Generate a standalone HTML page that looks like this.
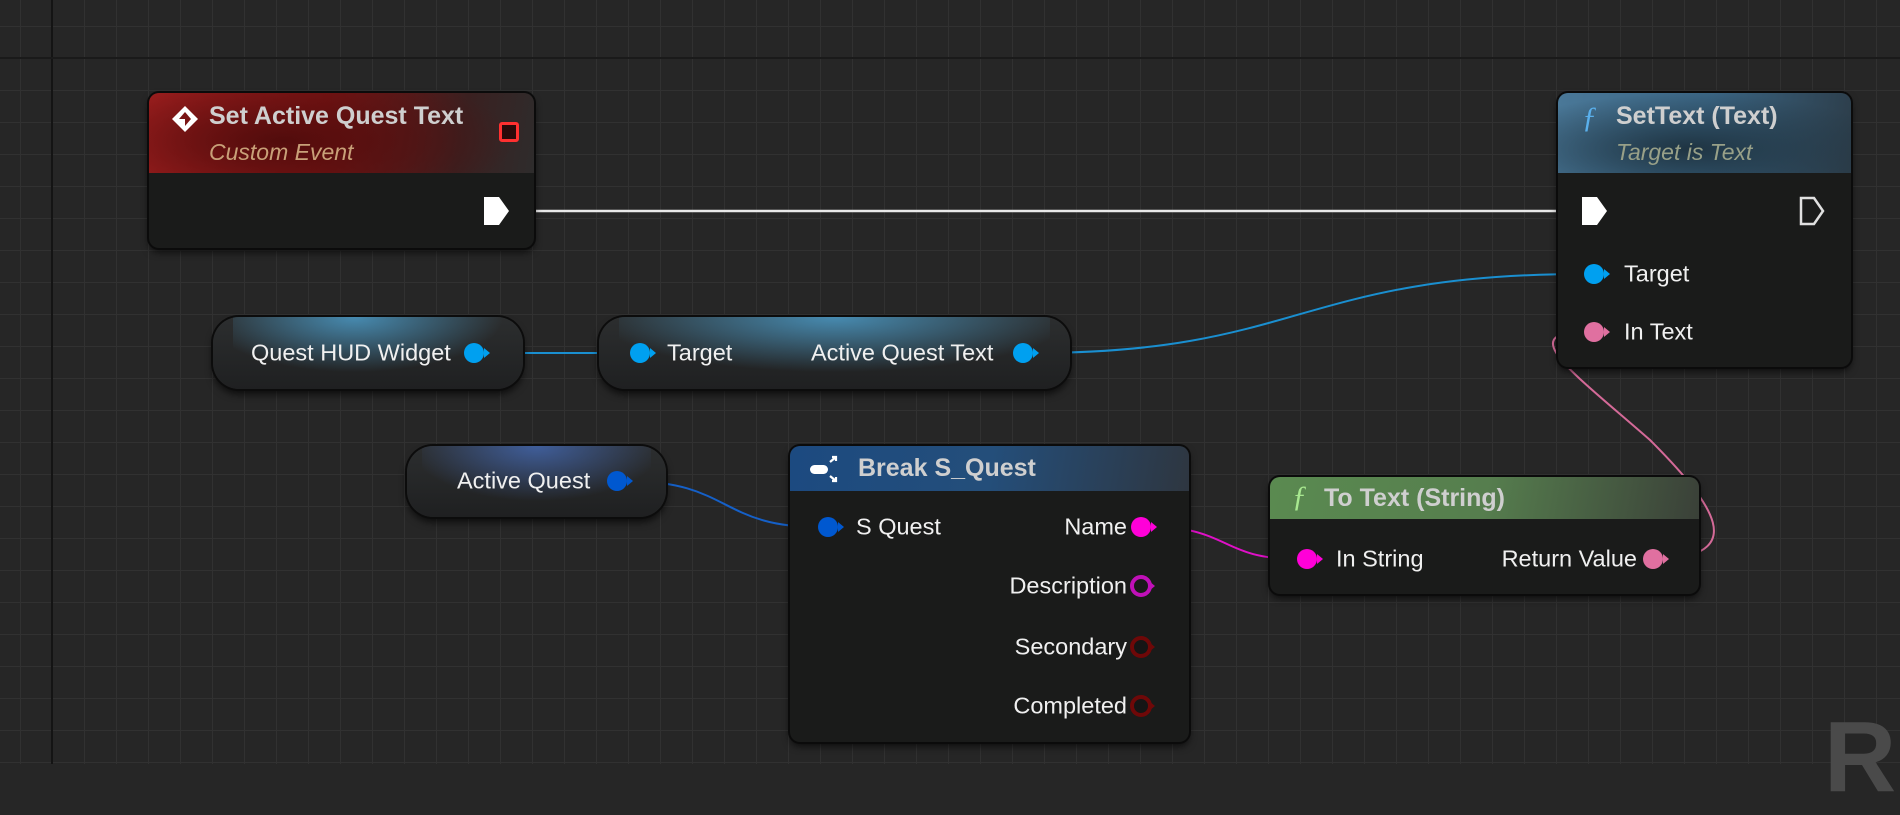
<!DOCTYPE html>
<html><head><meta charset="utf-8"><style>
*{margin:0;padding:0;box-sizing:border-box}
html{background:#262626}
body{width:1900px;height:764px;overflow:hidden;position:relative;background:#262626;font-family:"Liberation Sans",sans-serif;
background-image:linear-gradient(90deg,#313131 0 1px,transparent 1px),linear-gradient(#313131 0 1px,transparent 1px);
background-size:32px 32px,32px 32px;background-position:20px 0,0 26px;}
.node{position:absolute;background:#1a1b1a;border-radius:10px;box-shadow:0 0 0 2px #0b0b0b,0 4px 8px rgba(0,0,0,.7);overflow:hidden}
.hdr{position:absolute;left:0;top:0;right:0}
.t{position:absolute;color:#cfcfcf;font-weight:bold;font-size:25px;white-space:nowrap}
.s{position:absolute;font-style:italic;font-size:23px;white-space:nowrap}
.lbl{position:absolute;color:#f0f0f0;font-size:23.5px;white-space:nowrap;transform:translateY(-50%)}
.pill{position:absolute;border-radius:26px;background:linear-gradient(#2c2e2f,#1f2021);box-shadow:0 0 0 2px #0c0c0c,0 5px 8px rgba(0,0,0,.7);overflow:hidden}
.pin{position:absolute;width:20px;height:20px;border-radius:50%;transform:translate(-50%,-50%)}
.pin:after{content:"";position:absolute;left:100%;top:50%;margin-top:-5px;border-left:6px solid;border-left-color:inherit;border-top:5px solid transparent;border-bottom:5px solid transparent}
.ring{width:22px;height:22px;border:4px solid}
.ring:after{left:calc(100% + 1px)}
</style></head><body>
<div style="position:fixed;left:51px;top:0;width:2px;height:764px;background:#141414"></div>
<div style="position:fixed;left:0;top:57px;width:1900px;height:2px;background:#1a1a1a"></div>
<svg width="1900" height="764" style="position:absolute;left:0;top:0">
<path d="M514 211 L1580 211" stroke="#e8e8e8" stroke-width="2.5" fill="none"/>
<path d="M484 353 L630 353" stroke="#1a8fd0" stroke-width="2" fill="none"/>
<path d="M1033 353 C1300 353 1300 274 1585 274" stroke="#1a8fd0" stroke-width="2" fill="none"/>
<path d="M627 481 C730 481 720 527 818 527" stroke="#1560c8" stroke-width="2" fill="none"/>
<path d="M1151 527 C1230 527 1220 559 1297 559" stroke="#e010c8" stroke-width="2" fill="none"/>
<path d="M1672 559 C1740 550 1720 510 1650 440 C1570 370 1515 332 1585 332" stroke="#d46a98" stroke-width="2" fill="none"/>
</svg>

<!-- Event node -->
<div class="node" style="left:149px;top:93px;width:385px;height:155px">
<div class="hdr" style="height:80px;background:radial-gradient(ellipse 60% 90% at 35% 60%,#520c0c,transparent),linear-gradient(100deg,#a52020 0%,#7a1414 45%,#3a2020 80%,#2e2c2c 100%)"></div>
<svg style="position:absolute;left:20px;top:10px" width="32" height="32" viewBox="0 0 32 32"><path d="M16 3 L29 16 L16 29 L3 16Z" fill="#fff"/><path d="M16 9 L22 16 L16 23 L16 16 L10 16Z" fill="#7a1414"/></svg>
<div class="t" style="left:60px;top:9px">Set Active Quest Text</div>
<div class="s" style="left:60px;top:46px;color:#c8a078">Custom Event</div>
<div style="position:absolute;left:350px;top:29px;width:20px;height:20px;border:3px solid #ff3030;border-radius:3px;background:#2a0a0a"></div>
<svg style="position:absolute;left:333px;top:102px" width="30" height="32"><path d="M2 2 H17 L27 16 L17 30 H2Z" fill="#fff"/></svg>
</div>

<!-- SetText node -->
<div class="node" style="left:1558px;top:93px;width:293px;height:274px">
<div class="hdr" style="height:80px;background:radial-gradient(ellipse 70% 70% at 45% 70%,#1f3442,transparent),linear-gradient(100deg,#4a7898,#3a6482 50%,#2c3c48)"></div>
<div class="t" style="left:24px;top:8px;color:#5ab0ec;font-style:italic;font-weight:normal;font-family:'Liberation Serif',serif;font-size:30px">ƒ</div>
<div class="t" style="left:58px;top:9px">SetText (Text)</div>
<div class="s" style="left:58px;top:46px;color:#98a088">Target is Text</div>
<svg style="position:absolute;left:22px;top:102px" width="30" height="32"><path d="M2 2 H17 L27 16 L17 30 H2Z" fill="#fff"/></svg>
<svg style="position:absolute;left:240px;top:102px" width="30" height="32"><path d="M3 3 H16 L25 16 L16 29 H3Z" fill="none" stroke="#e0e0e0" stroke-width="2.5"/></svg>
<div class="pin" style="left:36px;top:181px;background:#00a0f0;border-color:#00a0f0"></div>
<div class="lbl" style="left:66px;top:181px">Target</div>
<div class="pin" style="left:36px;top:239px;background:#e070a0;border-color:#e070a0"></div>
<div class="lbl" style="left:66px;top:239px">In Text</div>
</div>

<!-- Quest HUD Widget -->
<div class="pill" style="left:213px;top:317px;width:310px;height:72px">
<div style="position:absolute;left:20px;right:20px;top:0;height:55px;background:radial-gradient(ellipse 55% 100% at 45% 0,rgba(80,170,220,.75),transparent)"></div>
<div class="lbl" style="left:38px;top:36px">Quest HUD Widget</div>
<div class="pin" style="left:261px;top:36px;background:#00a0f0;border-color:#00a0f0"></div>
</div>

<!-- Target / Active Quest Text -->
<div class="pill" style="left:599px;top:317px;width:471px;height:72px">
<div style="position:absolute;left:20px;right:20px;top:0;height:55px;background:radial-gradient(ellipse 55% 100% at 50% 0,rgba(80,170,220,.75),transparent)"></div>
<div class="pin" style="left:41px;top:36px;background:#00a0f0;border-color:#00a0f0"></div>
<div class="lbl" style="left:68px;top:36px">Target</div>
<div class="lbl" style="left:212px;top:36px">Active Quest Text</div>
<div class="pin" style="left:424px;top:36px;background:#00a0f0;border-color:#00a0f0"></div>
</div>

<!-- Active Quest -->
<div class="pill" style="left:407px;top:446px;width:259px;height:71px">
<div style="position:absolute;left:15px;right:15px;top:0;height:55px;background:radial-gradient(ellipse 55% 100% at 50% 0,rgba(70,110,190,.75),transparent)"></div>
<div class="lbl" style="left:50px;top:35px">Active Quest</div>
<div class="pin" style="left:210px;top:35px;background:#0058d0;border-color:#0058d0"></div>
</div>

<!-- Break S_Quest -->
<div class="node" style="left:790px;top:446px;width:399px;height:296px">
<div class="hdr" style="height:45px;background:linear-gradient(100deg,#1c4a80,#244e7a 50%,#2e3640)"></div>
<svg style="position:absolute;left:20px;top:8px" width="34" height="30" viewBox="0 0 34 30"><rect x="0" y="11" width="18" height="9" rx="4.5" fill="#fff"/><path d="M20 8 L26 3 M22 3 H26 V7 M20 22 L26 27 M22 27 H26 V23" stroke="#fff" stroke-width="2.2" fill="none"/></svg>
<div class="t" style="left:68px;top:8px">Break S_Quest</div>
<div class="pin" style="left:38px;top:81px;background:#0058d0;border-color:#0058d0"></div>
<div class="lbl" style="left:66px;top:81px">S Quest</div>
<div class="lbl" style="right:62px;top:81px">Name</div>
<div class="pin" style="left:351px;top:81px;background:#ff00d8;border-color:#ff00d8"></div>
<div class="lbl" style="right:62px;top:140px">Description</div>
<div class="pin ring" style="left:351px;top:140px;border-color:#c010b8;background:#1a1a1a"></div>
<div class="lbl" style="right:62px;top:201px">Secondary</div>
<div class="pin ring" style="left:351px;top:201px;border-color:#6e0808;background:#151515"></div>
<div class="lbl" style="right:62px;top:260px">Completed</div>
<div class="pin ring" style="left:351px;top:260px;border-color:#6e0808;background:#151515"></div>
</div>

<!-- To Text -->
<div class="node" style="left:1270px;top:477px;width:429px;height:117px">
<div class="hdr" style="height:42px;background:linear-gradient(100deg,#5a8a50,#567e4e 50%,#3a4038)"></div>
<div class="t" style="left:22px;top:3px;color:#a8e890;font-style:italic;font-weight:normal;font-family:'Liberation Serif',serif;font-size:30px">ƒ</div>
<div class="t" style="left:54px;top:7px">To Text (String)</div>
<div class="pin" style="left:37px;top:82px;background:#ff00d8;border-color:#ff00d8"></div>
<div class="lbl" style="left:66px;top:82px">In String</div>
<div class="lbl" style="right:62px;top:82px">Return Value</div>
<div class="pin" style="left:383px;top:82px;background:#e070a0;border-color:#e070a0"></div>
</div>

<div style="position:absolute;left:1824px;top:700px;font-size:100px;font-weight:bold;color:#4a4a4a">R</div>
</body></html>
